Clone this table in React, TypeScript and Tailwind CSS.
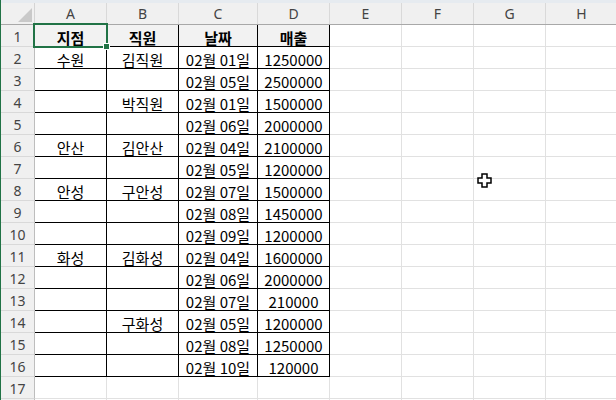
import React from 'react'

const COLS = [
  { key: 'A', w: 'w-[72px]' },
  { key: 'B', w: 'w-[72px]' },
  { key: 'C', w: 'w-[79px]' },
  { key: 'D', w: 'w-[72px]' },
  { key: 'E', w: 'w-[72px]' },
  { key: 'F', w: 'w-[72px]' },
  { key: 'G', w: 'w-[72px]' },
  { key: 'H', w: 'w-[72px]' },
]

const DATA: string[][] = [
  ['지점', '직원', '날짜', '매출'],
  ['수원', '김직원', '02월 01일', '1250000'],
  ['', '', '02월 05일', '2500000'],
  ['', '박직원', '02월 01일', '1500000'],
  ['', '', '02월 06일', '2000000'],
  ['안산', '김안산', '02월 04일', '2100000'],
  ['', '', '02월 05일', '1200000'],
  ['안성', '구안성', '02월 07일', '1500000'],
  ['', '', '02월 08일', '1450000'],
  ['', '', '02월 09일', '1200000'],
  ['화성', '김화성', '02월 04일', '1600000'],
  ['', '', '02월 06일', '2000000'],
  ['', '', '02월 07일', '210000'],
  ['', '구화성', '02월 05일', '1200000'],
  ['', '', '02월 08일', '1250000'],
  ['', '', '02월 10일', '120000'],
]

const headFont = { fontFamily: '"Noto Sans", "Liberation Sans", sans-serif' }
const cellFont = { fontFamily: '"Noto Sans CJK KR", "Noto Sans", sans-serif' }

export default function App() {
  const rows = Array.from({ length: 18 }, (_, i) => i + 1)

  return (
    <div className="relative w-[616px] h-[400px] overflow-hidden bg-white flex">
      <div className="w-px shrink-0 bg-[#217346]" />
      <div className="flex flex-col">
        <div className="h-[3px] shrink-0 w-[616px] bg-[#e6ebf0]" />

        {/* column headers */}
        <div className="flex shrink-0 h-[22px] bg-[#f0f0f0] border-b border-[#a8a8a8]" style={headFont}>
          <div className="relative w-[34px] shrink-0 border-r border-[#d4d4d4]">
            <svg className="absolute left-[17px] top-[5px]" width="14" height="14" viewBox="0 0 14 14">
              <polygon points="14,0 14,14 0,14" fill="#c9c9c9" />
            </svg>
          </div>
          {COLS.map(c => (
            <div
              key={c.key}
              className={`${c.w} shrink-0 flex items-center justify-center text-[14px] text-[#444] border-r border-[#d9d9d9]`}
            >
              {c.key}
            </div>
          ))}
        </div>

        {/* rows */}
        {rows.map(r => {
          const rowData = DATA[r - 1]
          return (
            <div key={r} className="flex shrink-0 h-[22px]">
              <div
                className="w-[34px] shrink-0 flex items-center justify-center pt-[2px] bg-[#f0f0f0] text-[14px] text-[#444] border-r border-b border-r-[#bdbdbd] border-b-[#d9d9d9]"
                style={headFont}
              >
                {r <= 17 ? r : ''}
              </div>
              {COLS.map((c, ci) => {
                const inTable = !!rowData && ci < 4
                const text = inTable ? rowData[ci] : ''
                const isHead = r === 1 && inTable
                return (
                  <div
                    key={c.key}
                    className={`${c.w} shrink-0 flex items-center justify-center pt-[3px] text-[15px] leading-none text-black border-r border-b ${
                      inTable ? 'border-black' : 'border-[#e1e1e1]'
                    } ${isHead ? 'bg-[#f2f2f2] font-bold' : ''}`}
                    style={cellFont}
                  >
                    {text}
                  </div>
                )
              })}
            </div>
          )
        })}
      </div>

      {/* active cell A1 */}
      <div className="absolute left-[33px] top-[23px] w-[75px] h-[25px] border-2 border-[#217346] pointer-events-none" />
      <div className="absolute left-[103px] top-[43px] w-[7px] h-[7px] bg-[#217346] border border-white" />

      {/* mouse cursor */}
      <svg className="absolute left-[477px] top-[173px]" width="15" height="15" viewBox="0 0 15 15">
        <path
          d="M5 1 H10 V5 H14 V10 H10 V14 H5 V10 H1 V5 H5 Z"
          fill="#fff"
          stroke="#000"
          strokeWidth="1.5"
          strokeLinejoin="miter"
        />
      </svg>
    </div>
  )
}
